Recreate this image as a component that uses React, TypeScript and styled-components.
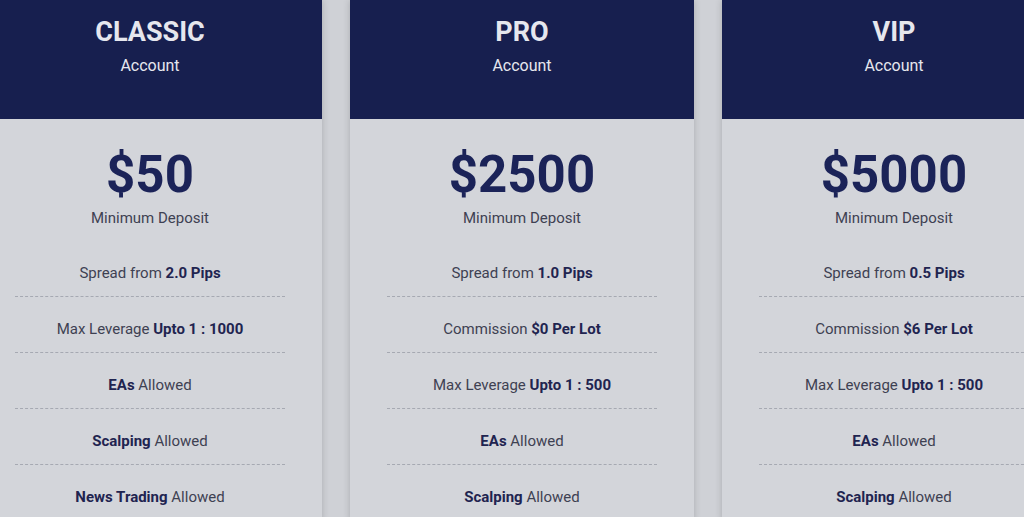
import styled, { createGlobalStyle } from 'styled-components';

interface Feature {
  before?: string;
  strong: string;
  after?: string;
}

interface Plan {
  name: string;
  price: string;
  features: Feature[];
}

const plans: Plan[] = [
  {
    name: 'CLASSIC',
    price: '$50',
    features: [
      { before: 'Spread from ', strong: '2.0 Pips' },
      { before: 'Max Leverage ', strong: 'Upto 1 : 1000' },
      { strong: 'EAs', after: ' Allowed' },
      { strong: 'Scalping', after: ' Allowed' },
      { strong: 'News Trading', after: ' Allowed' },
    ],
  },
  {
    name: 'PRO',
    price: '$2500',
    features: [
      { before: 'Spread from ', strong: '1.0 Pips' },
      { before: 'Commission ', strong: '$0 Per Lot' },
      { before: 'Max Leverage ', strong: 'Upto 1 : 500' },
      { strong: 'EAs', after: ' Allowed' },
      { strong: 'Scalping', after: ' Allowed' },
    ],
  },
  {
    name: 'VIP',
    price: '$5000',
    features: [
      { before: 'Spread from ', strong: '0.5 Pips' },
      { before: 'Commission ', strong: '$6 Per Lot' },
      { before: 'Max Leverage ', strong: 'Upto 1 : 500' },
      { strong: 'EAs', after: ' Allowed' },
      { strong: 'Scalping', after: ' Allowed' },
    ],
  },
];

export default function App() {
  return (
    <>
      <GlobalStyle />
      <Viewport>
        <Row>
          {plans.map(plan => (
            <Card key={plan.name}>
              <Header>
                <PlanName>{plan.name}</PlanName>
                <PlanSub>Account</PlanSub>
              </Header>
              <Body>
                <Price>{plan.price}</Price>
                <PriceLabel>Minimum Deposit</PriceLabel>
                <FeatureList>
                  {plan.features.map((f, i) => (
                    <FeatureItem key={i}>
                      {f.before}
                      <b>{f.strong}</b>
                      {f.after}
                    </FeatureItem>
                  ))}
                </FeatureList>
              </Body>
            </Card>
          ))}
        </Row>
      </Viewport>
    </>
  );
}

const GlobalStyle = createGlobalStyle`
  html, body {
    margin: 0;
    padding: 0;
    background: #cfd1d6;
    overflow: hidden;
    font-family: Roboto, 'Liberation Sans', sans-serif;
  }
`;

const Viewport = styled.div`
  width: 1024px;
  height: 517px;
  overflow: hidden;
`;

const Row = styled.div`
  display: flex;
  align-items: flex-start;
  gap: 28px;
  margin-left: -22px;
`;

const Card = styled.div`
  flex: 0 0 344px;
  display: flex;
  flex-direction: column;
  background: #d3d5da;
  box-shadow: 0 0 7px rgba(0, 0, 0, 0.18);
`;

const Header = styled.div`
  flex-shrink: 0;
  height: 119px;
  box-sizing: border-box;
  padding-top: 15px;
  background: #171f4f;
  text-align: center;
  color: #e6e7ee;
`;

const PlanName = styled.div`
  font-size: 27px;
  font-weight: 700;
  line-height: 34px;
`;

const PlanSub = styled.div`
  font-size: 16px;
  line-height: 20px;
  margin-top: 7px;
`;

const Body = styled.div`
  padding: 24px 37px 0;
  text-align: center;
`;

const Price = styled.div`
  font-size: 51px;
  font-weight: 700;
  line-height: 64px;
  color: #1b2358;
`;

const PriceLabel = styled.div`
  font-size: 15px;
  line-height: 20px;
  margin-top: 1px;
  color: #3e4152;
`;

const FeatureList = styled.ul`
  list-style: none;
  margin: 0;
  padding: 0;
`;

const FeatureItem = styled.li`
  padding: 23px 0 14px;
  font-size: 15px;
  line-height: 18px;
  color: #3e4152;
  border-bottom: 1px dashed #a6a9b2;

  &:first-child {
    padding-top: 36px;
  }

  b {
    font-weight: 700;
    color: #1f2450;
  }
`;
